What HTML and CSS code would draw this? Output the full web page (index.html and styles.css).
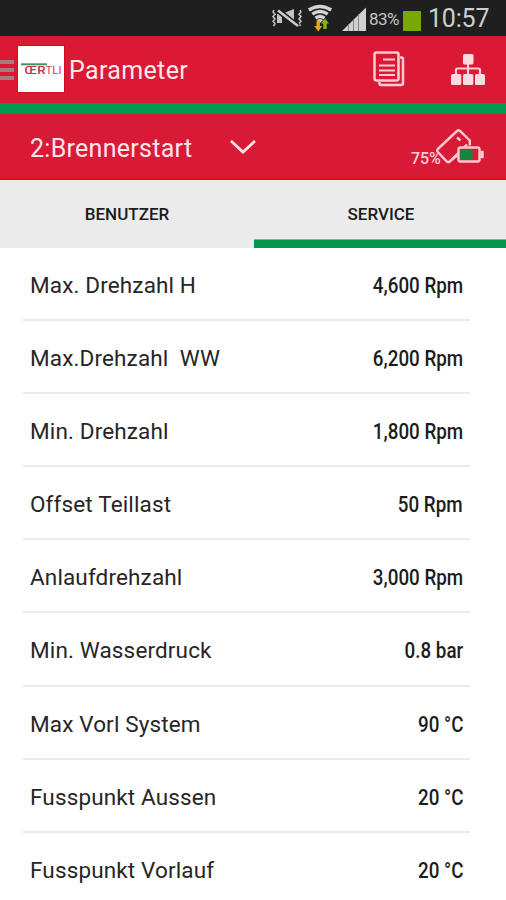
FILE: index.html
```html
<!DOCTYPE html>
<html lang="de">
<head>
<meta charset="utf-8">
<title>Parameter</title>
<link rel="stylesheet" href="styles.css">
</head>
<body>
<div class="status">
  <svg class="status-icons" width="108" height="36" viewBox="0 0 108 36">
    <path d="M2 10l-1 2 2 2.300-2 2.300 2 2.300-2 2.300 2 2.300-1.500 2.500M28 10l1 2-2 2.300 2 2.300-2 2.300 2 2.300-2 2.300 1.500 2.500" fill="none" stroke="#bdbdbd" stroke-width="1.600"/>
    <path d="M5 14h5v9H5zM12 13l10-4v15l-3-2z" fill="#c4c4c4"/>
    <path d="M5 9.500l21 17" stroke="#1f1f1f" stroke-width="5.500"/>
    <path d="M6 10.500l20 15.500" stroke="#cdcdcd" stroke-width="2.400"/>
    <g fill="none" stroke="#d4d4d4" stroke-width="3.400">
      <path d="M36.800 10Q48 3 59.200 10M40.300 14.200Q48 9 55.700 14.200M43.500 18.200Q48 15 52.500 18.200"/>
    </g>
    <path d="M45 20Q48 18 51 20L48 23z" fill="#d4d4d4"/>
    <path d="M44.500 20.500h3.400V26h2.300l-4 5.500-4-5.500h2.300z" fill="#eba51b"/>
    <path d="M53 18.500l4 5h-2.300v5.500h-3.400v-5.500H49z" fill="#83b51b"/>
    <path d="M70 31L94 7.500V31z" fill="#d0d0d0"/>
    <path d="M76.500 24.500V31M81.500 19.500V31M86.500 14.500V31" stroke="#858585"/>
  </svg>
  <span class="status-percent">83%</span>
  <span class="battery"></span>
  <span class="clock">10:57</span>
</div>
<header class="appbar">
  <span class="menu"><i></i><i></i><i></i></span>
  <svg class="logo" width="46" height="46" viewBox="0 0 46 46">
    <path fill="#fff" d="M0 0h46v46H0z"/>
    <path d="M3 18.300h26" stroke="#2d9c60" stroke-width="2"/>
    <text x="6.500" y="27.800" textLength="21" lengthAdjust="spacingAndGlyphs" class="logo-bold">ŒR</text>
    <text x="27.500" y="27.800" textLength="16" lengthAdjust="spacingAndGlyphs" class="logo-light">TLI</text>
  </svg>
  <h1 class="title">Parameter</h1>
  <svg class="docs" width="32" height="36" viewBox="0 0 32 36" fill="none" stroke="#ffccd4" stroke-width="2.500">
    <path d="M27 6.500h1.500q1.500 0 1.500 1.500v24q0 2-2 2H8q-1.500 0-1.500-2v-1"/>
    <rect x="1.500" y="1.500" width="24" height="28" rx="2"/>
    <path d="M10 8.500h12M6 14.500h16M6 19.500h16M6 24h16" stroke-width="2"/>
  </svg>
  <svg class="tree" width="34" height="32" viewBox="0 0 34 32">
    <path d="M17 10v10M5 21v-5q0-1.500 1.500-1.500h21q1.500 0 1.500 1.500v5" fill="none" stroke="#ffccd4" stroke-width="2.200"/>
    <g fill="#ffdbe1"><rect x="12" y="0" width="10.500" height="10.500" rx="1.500"/><rect x="0" y="20" width="10.300" height="11" rx="1.500"/><rect x="12" y="20" width="10.300" height="11" rx="1.500"/><rect x="24" y="20" width="10" height="11" rx="1.500"/></g>
  </svg>
</header>
<div class="rule"></div>
<div class="subbar">
  <span class="selected">2:Brennerstart</span>
  <svg class="chevron" width="28" height="16" viewBox="0 0 28 16"><path d="M2 2l12 11L26 2" fill="none" stroke="#ffe3e7" stroke-width="2.800"/></svg>
  <span class="device-percent">75%</span>
  <svg class="device" width="50" height="40" viewBox="0 0 50 40" fill="none" stroke="#ffc9d0" stroke-width="2.400">
    <path d="M1.800 22L21 4q1.500-1.300 3 0l9.800 9.500v5M1.800 22q-1.200 1.500 0 3l9 9.500q1.500 1.200 3 0l7.200-6M21 10.500l3.500 3M13.500 34.500L31 17.500"/>
    <rect x="22.500" y="20.500" width="21" height="14" rx="2" fill="#d91a36"/>
    <path d="M24.200 22.500H36.500V33H24.200z" fill="#15853f" stroke="none"/>
    <path d="M45.500 25h1v5h-1z"/>
  </svg>
</div>
<nav class="tabs">
  <span class="tab">BENUTZER</span>
  <span class="tab active">SERVICE</span>
</nav>
<main class="list">
  <div class="row"><span class="name">Max. Drehzahl H</span><span class="value">4,600 Rpm</span></div>
  <div class="row"><span class="name">Max.Drehzahl&nbsp; WW</span><span class="value">6,200 Rpm</span></div>
  <div class="row"><span class="name">Min. Drehzahl</span><span class="value">1,800 Rpm</span></div>
  <div class="row"><span class="name">Offset Teillast</span><span class="value">50 Rpm</span></div>
  <div class="row"><span class="name">Anlaufdrehzahl</span><span class="value">3,000 Rpm</span></div>
  <div class="row"><span class="name">Min. Wasserdruck</span><span class="value">0.8 bar</span></div>
  <div class="row"><span class="name">Max Vorl System</span><span class="value">90 °C</span></div>
  <div class="row"><span class="name">Fusspunkt Aussen</span><span class="value">20 °C</span></div>
  <div class="row"><span class="name">Fusspunkt Vorlauf</span><span class="value">20 °C</span></div>
</main>
</body>
</html>
```
FILE: styles.css
```css
* { box-sizing: border-box; }
body {
  margin: 0;
  width: 506px;
  height: 900px;
  overflow: hidden;
  background: #fff;
  font-family: Roboto, "Liberation Sans", sans-serif;
}
svg { display: block; flex: none; }
.status {
  display: flex;
  height: 36px;
  padding-left: 272px;
  background: #1f1f1f;
  color: #c4c4c4;
}
.status-icons { margin-right: -11px; }
.status-percent {
  width: 34px;
  font-size: 17px;
  line-height: 38px;
  letter-spacing: -0.5px;
  white-space: nowrap;
}
.battery {
  width: 18px;
  height: 20px;
  margin-top: 11px;
  background: #78a900;
}
.clock {
  margin-left: 7px;
  font-size: 25px;
  line-height: 38px;
  letter-spacing: -0.2px;
  color: #cfcfcf;
}
.appbar {
  display: flex;
  align-items: flex-start;
  height: 67px;
  background: #db1935;
}
.menu { width: 14px; margin: 24px 4px 0 0; }
.menu i {
  display: block;
  height: 4px;
  margin-bottom: 4px;
  background: #a97b80;
}
.logo { margin-top: 10px; box-shadow: 0 0 0 1px #cf0f1c; }
.logo-bold { font: 500 10.5px Roboto, sans-serif; fill: #c92d48; }
.logo-light { font: 400 10.5px Roboto, sans-serif; fill: #cf4259; }
.title {
  width: 304px;
  margin: 0 0 0 5px;
  font-size: 25px;
  font-weight: 400;
  line-height: 70px;
  letter-spacing: 0.35px;
  color: #ffe6ea;
}
.docs { margin-top: 15px; }
.tree { margin: 18px 0 0 46px; }
.rule {
  height: 11px;
  border: solid #8b5440;
  border-width: 1px 0;
  background: #019a4f;
}
.subbar {
  display: flex;
  height: 66px;
  padding-left: 30px;
  border-bottom: 2px solid #d5101f;
  background: #d91a36;
  color: #ffe6ea;
}
.selected {
  width: 199px;
  font-size: 25px;
  line-height: 69px;
  letter-spacing: 0.28px;
}
.chevron { margin-top: 25px; }
.device-percent {
  width: 25px;
  margin-left: 154px;
  font-size: 16px;
  font-weight: 500;
  line-height: 90px;
  letter-spacing: -0.1px;
  color: #ffccd4;
}
.device { margin-top: 13px; }
.tabs {
  display: grid;
  grid-template-columns: 254px 252px;
  grid-template-rows: 68px;
  height: 68px;
  background: #ebebeb;
}
.tab {
  font-size: 17px;
  font-weight: 500;
  line-height: 69px;
  text-align: center;
  color: #1b1b1b;
}
.tab.active {
  padding-left: 2px;
  box-shadow: inset 0 -8.5px #029749;
}
.list { padding: 0 36px 0 23px; }
.row {
  display: flex;
  justify-content: space-between;
  height: 73.1px;
  padding: 0 7px;
  border-bottom: 2px solid #ebebeb;
  font-size: 22.5px;
  line-height: 75px;
  white-space: pre;
  color: #262626;
}
.row:last-child { border: 0; }
.name { letter-spacing: 0.14px; }
.value {
  transform: scaleX(0.835);
  transform-origin: right;
  font-weight: 500;
  color: #1c1c1c;
}
```
